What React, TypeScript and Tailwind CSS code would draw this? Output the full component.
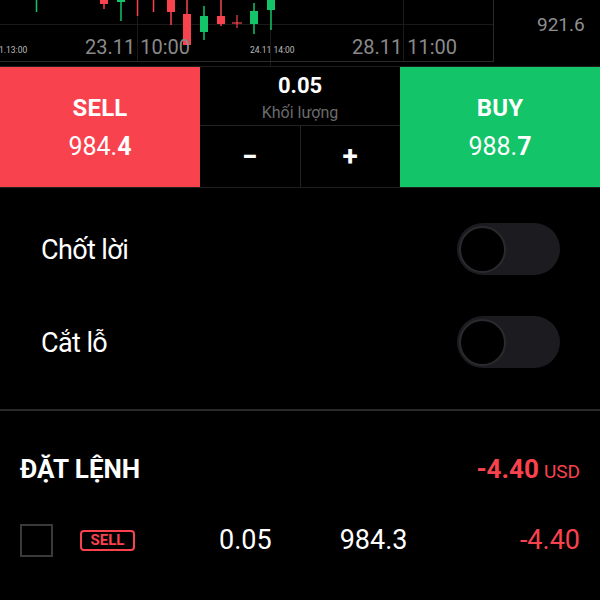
import React from "react";

const RED = "#f8434f";
const GREEN = "#13c468";

type Candle = { x: number; top: number; bot: number; wt: number; wb: number; up: boolean };

const candles: Candle[] = [
  { x: 100, top: -2, bot: 4, wt: -2, wb: 9, up: false },
  { x: 117, top: -2, bot: 2, wt: -2, wb: 21, up: true },
  { x: 167, top: -2, bot: 12, wt: -2, wb: 25, up: false },
  { x: 183, top: 14, bot: 45, wt: -2, wb: 45, up: false },
  { x: 200, top: 16, bot: 32, wt: 6, wb: 40, up: true },
  { x: 217, top: 16, bot: 24, wt: -2, wb: 26, up: false },
  { x: 250, top: 11, bot: 24, wt: 3, wb: 34, up: true },
  { x: 267, top: -2, bot: 10, wt: -2, wb: 30, up: true },
];

function Chart() {
  return (
    <svg width={600} height={66} viewBox="0 0 600 66" className="block">
      <g stroke="#1a1a1a" strokeWidth={1}>
        <line x1={0} y1={24.5} x2={493} y2={24.5} />
        <line x1={137.5} y1={0} x2={137.5} y2={61} />
        <line x1={270.5} y1={0} x2={270.5} y2={66} />
        <line x1={403.5} y1={0} x2={403.5} y2={61} />
      </g>
      <line x1={0} y1={61.5} x2={493} y2={61.5} stroke="#2a2a2a" strokeWidth={1} />
      <line x1={493.5} y1={0} x2={493.5} y2={62} stroke="#2a2a2a" strokeWidth={1} />
      <line x1={36.5} y1={0} x2={36.5} y2={12} stroke={GREEN} strokeWidth={1.5} />
      <line x1={137.5} y1={0} x2={137.5} y2={16} stroke={RED} strokeWidth={1.5} />
      <line x1={153.5} y1={0} x2={153.5} y2={12} stroke={RED} strokeWidth={1.5} />
      <line x1={237} y1={15} x2={237} y2={28} stroke={RED} strokeWidth={1.2} />
      <line x1={232} y1={23} x2={242} y2={23} stroke={RED} strokeWidth={1.2} />
      {candles.map((c, i) => {
        const col = c.up ? GREEN : RED;
        return (
          <g key={i}>
            <line x1={c.x + 4} y1={c.wt} x2={c.x + 4} y2={c.wb} stroke={col} strokeWidth={1.5} />
            <rect x={c.x} y={c.top} width={8} height={c.bot - c.top} fill={col} />
          </g>
        );
      })}
      <g fontFamily="Roboto, sans-serif">
        <text x={-1} y={53} fontSize={8.5} fill="#bdbdbd">1.13:00</text>
        <text x={85} y={54} fontSize={20} fill="#8a8a8a">23.11 10:00</text>
        <text x={250} y={53} fontSize={8.5} fill="#bdbdbd">24.11 14:00</text>
        <text x={352} y={54} fontSize={20} fill="#8a8a8a">28.11 11:00</text>
        <text x={537} y={31} fontSize={19} fill="#8f8f8f">921.6</text>
      </g>
    </svg>
  );
}

function Toggle() {
  return (
    <div className="w-[103px] h-[52px] rounded-full bg-[#1c1c20] flex items-center pl-[2px]">
      <div className="w-[47px] h-[47px] rounded-full bg-black border-2 border-[#2a2a2f]" />
    </div>
  );
}

export default function App() {
  return (
    <div className="w-[600px] h-[600px] bg-black overflow-hidden font-['Roboto',sans-serif] text-white">
      <Chart />
      <div className="flex h-[122px] border-t border-b border-[#1e1e1e]">
        <div className="w-[200px] bg-[#f8434f] flex flex-col items-center justify-center">
          <div className="text-[24px] font-bold leading-none tracking-[0.2px] mt-[1px]">SELL</div>
          <div className="text-[25px] leading-none mt-[14px]">
            984.<span className="font-bold">4</span>
          </div>
        </div>
        <div className="w-[200px] flex flex-col">
          <div className="h-[59px] flex flex-col items-center justify-center border-b border-[#232323]">
            <div className="text-[22px] font-bold leading-none mt-[3px]">0.05</div>
            <div className="text-[16px] leading-none text-[#6b6b6b] mt-[8px]">Khối lượng</div>
          </div>
          <div className="flex-1 flex">
            <div className="flex-1 flex items-center justify-center border-r border-[#232323] text-[28px] font-bold leading-none">−</div>
            <div className="flex-1 flex items-center justify-center text-[28px] font-bold leading-none">+</div>
          </div>
        </div>
        <div className="w-[200px] bg-[#13c468] flex flex-col items-center justify-center">
          <div className="text-[24px] font-bold leading-none tracking-[0.2px] mt-[1px]">BUY</div>
          <div className="text-[25px] leading-none mt-[14px]">
            988.<span className="font-bold">7</span>
          </div>
        </div>
      </div>

      <div className="flex flex-col gap-[41px] pt-[35px] pb-[41px] pl-[41px] pr-[40px] border-b-2 border-[#2a2a2a]">
        <div className="flex items-center justify-between h-[52px]">
          <span className="text-[27px] tracking-[-0.6px] mt-[3px]">Chốt lời</span>
          <Toggle />
        </div>
        <div className="flex items-center justify-between h-[52px]">
          <span className="text-[27px] tracking-[-0.6px] mt-[3px]">Cắt lỗ</span>
          <Toggle />
        </div>
      </div>

      <div className="flex items-end justify-between px-[20px] pt-[45px]">
        <span className="text-[26px] font-bold leading-none">ĐẶT LỆNH</span>
        <span className="leading-none text-[#f8434f]">
          <span className="text-[26px] font-bold">-4.40</span>
          <span className="text-[19px] ml-[5px]">USD</span>
        </span>
      </div>

      <div className="flex items-center px-[20px] mt-[41px] h-[34px]">
        <div className="w-[33px] h-[33px] border-2 border-[#3a3a3a]" />
        <div className="ml-[27px] w-[55px] h-[21px] border-2 border-[#f8434f] rounded-[4px] flex items-center justify-center text-[15px] font-bold text-[#f8434f] leading-none">
          SELL
        </div>
        <div className="ml-[84px] text-[27px] leading-none">0.05</div>
        <div className="ml-[68px] text-[27px] leading-none">984.3</div>
        <div className="ml-auto text-[27px] leading-none text-[#f8434f]">-4.40</div>
      </div>
    </div>
  );
}
